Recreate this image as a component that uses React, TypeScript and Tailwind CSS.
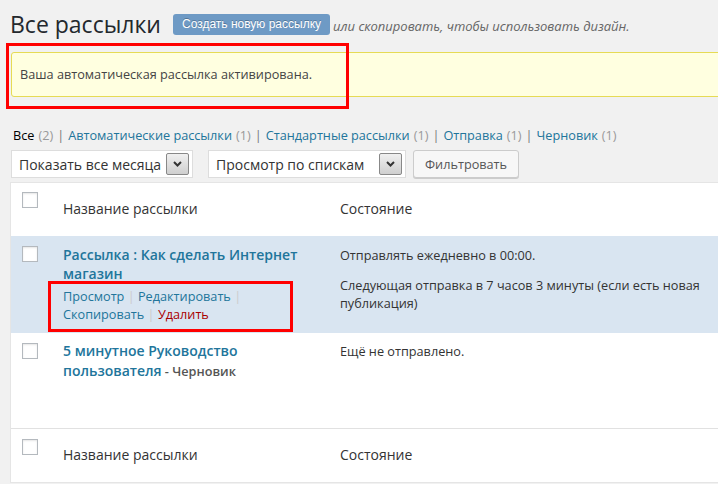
import React from 'react'

const Checkbox = () => (
  <div className="w-4 h-4 bg-white border border-[#b4b9be] shadow-[inset_0_1px_2px_rgba(0,0,0,0.1)]" />
)

const SelectBox = ({ label, width }: { label: string; width: string }) => (
  <div className={`${width} h-[28px] bg-white border border-[#ddd] flex items-center justify-between pl-[7px] pr-[3px]`}>
    <span className="text-[14px] text-[#333]">{label}</span>
    <span className="w-[23px] h-[22px] border border-[#888] rounded-[2px] bg-gradient-to-b from-[#f0f0f0] to-[#cfcfcf] flex items-center justify-center">
      <svg width="9" height="6" viewBox="0 0 9 6">
        <path d="M1 1l3.5 3.5L8 1" stroke="#333" strokeWidth="2" fill="none" />
      </svg>
    </span>
  </div>
)

const App = () => {
  const tabs = [
    { label: 'Автоматические рассылки', count: 1 },
    { label: 'Стандартные рассылки', count: 1 },
    { label: 'Отправка', count: 1 },
    { label: 'Черновик', count: 1 }
  ]

  return (
    <div className="relative w-[718px] h-[484px] overflow-hidden bg-[#f1f1f1] font-['Open_Sans',sans-serif] text-[#444]">
      <div className="pt-[10px]">
        {/* title row */}
        <div className="flex items-center pl-[10px]">
          <h1 className="text-[23px] leading-[29px] text-[#23282d]">Все рассылки</h1>
          <span className="ml-[12px] h-[21px] px-[9px] rounded-[3px] bg-[#6e9ac5] text-white text-[12px] leading-[21px] font-['Liberation_Sans',Arial,sans-serif] [text-shadow:0_-1px_0_rgba(0,0,0,0.25)]">
            Создать новую рассылку
          </span>
          <span className="ml-[3px] mt-[4px] text-[13px] italic text-[#666]">или скопировать, чтобы использовать дизайн.</span>
        </div>

        {/* notice */}
        <div className="mt-[13px] ml-[11px] w-[720px] bg-[#ffffe0] border border-[#e6db55] rounded-[3px] py-[12px] pl-[8px] text-[12.7px] leading-[19px] text-[#444]">
          Ваша автоматическая рассылка активирована.
        </div>

        {/* sub nav */}
        <div className="mt-[28px] ml-[13px] text-[12.7px] leading-[20px] text-[#666] flex items-center">
          <span className="text-black">Все</span>
          <span className="ml-[4px] text-[#999]">(2)</span>
          {tabs.map((t) => (
            <span key={t.label} className="flex items-center">
              <span className="mx-[4px] text-[#777]">|</span>
              <span className="text-[#21759b]">{t.label}</span>
              <span className="ml-[4px] text-[#999]">({t.count})</span>
            </span>
          ))}
        </div>

        {/* table nav */}
        <div className="mt-[5px] ml-[11px] flex items-center">
          <SelectBox label="Показать все месяца" width="w-[182px]" />
          <div className="ml-[15px]">
            <SelectBox label="Просмотр по спискам" width="w-[198px]" />
          </div>
          <div className="ml-[7px] h-[28px] px-[11px] bg-[#f7f7f7] border border-[#ccc] rounded-[3px] shadow-[0_1px_0_#ccc] text-[12.7px] leading-[26px] text-[#555]">
            Фильтровать
          </div>
        </div>

        {/* table */}
        <div className="mt-[4px] ml-[10px] w-[720px] bg-white border border-[#e5e5e5] text-[14px]">
          <div className="grid grid-cols-[41px_277px_1fr] h-[53px]">
            <div className="pl-[11px] pt-[9px]"><Checkbox /></div>
            <div className="pl-[11px] pb-[3px] flex items-center text-[#333]">Название рассылки</div>
            <div className="pl-[11px] pb-[3px] flex items-center text-[#333]">Состояние</div>
          </div>

          <div className="grid grid-cols-[41px_277px_1fr] h-[97px] bg-[#d9e5f1]">
            <div className="pl-[11px] pt-[10px]"><Checkbox /></div>
            <div className="pl-[11px] pt-[9px]">
              <div className="font-semibold text-[#21759b] leading-[19px]">Рассылка : Как сделать Интернет магазин</div>
              <div className="mt-[4px] text-[12.7px] leading-[18px] text-[#21759b]">
                <div>
                  Просмотр <span className="text-[#ccc]">|</span> Редактировать <span className="text-[#ccc]">|</span>
                </div>
                <div>
                  Скопировать <span className="text-[#ccc]">|</span> <span className="text-[#a00]">Удалить</span>
                </div>
              </div>
            </div>
            <div className="pl-[11px] pt-[10px] pr-[8px] text-[12.7px] leading-[18px] text-[#333]">
              <p>Отправлять ежедневно в 00:00.</p>
              <p className="mt-[12px]">Следующая отправка в 7 часов 3 минуты (если есть новая публикация)</p>
            </div>
          </div>

          <div className="grid grid-cols-[41px_277px_1fr] h-[96px] border-b border-[#e1e1e1]">
            <div className="pl-[11px] pt-[10px]"><Checkbox /></div>
            <div className="pl-[11px] pt-[8px] leading-[20px]">
              <div className="font-semibold text-[#21759b]">5 минутное Руководство</div>
              <div>
                <span className="font-semibold text-[#21759b]">пользователя</span>
                <span className="font-semibold text-[12.7px] text-[#555]"> - Черновик</span>
              </div>
            </div>
            <div className="pl-[11px] pt-[9px] text-[12.7px] leading-[18px] text-[#333]">Ещё не отправлено.</div>
          </div>

          <div className="grid grid-cols-[41px_277px_1fr] h-[53px]">
            <div className="pl-[11px] pt-[10px]"><Checkbox /></div>
            <div className="pl-[11px] pb-[2px] flex items-center text-[#333]">Название рассылки</div>
            <div className="pl-[11px] pb-[2px] flex items-center text-[#333]">Состояние</div>
          </div>
        </div>
      </div>

      {/* red highlight boxes */}
      <div className="absolute left-[6px] top-[43px] w-[343px] h-[66px] border-[3px] border-[#ff0000]" />
      <div className="absolute left-[48px] top-[281px] w-[245px] h-[51px] border-[3px] border-[#ff0000]" />
    </div>
  )
}

export default App
